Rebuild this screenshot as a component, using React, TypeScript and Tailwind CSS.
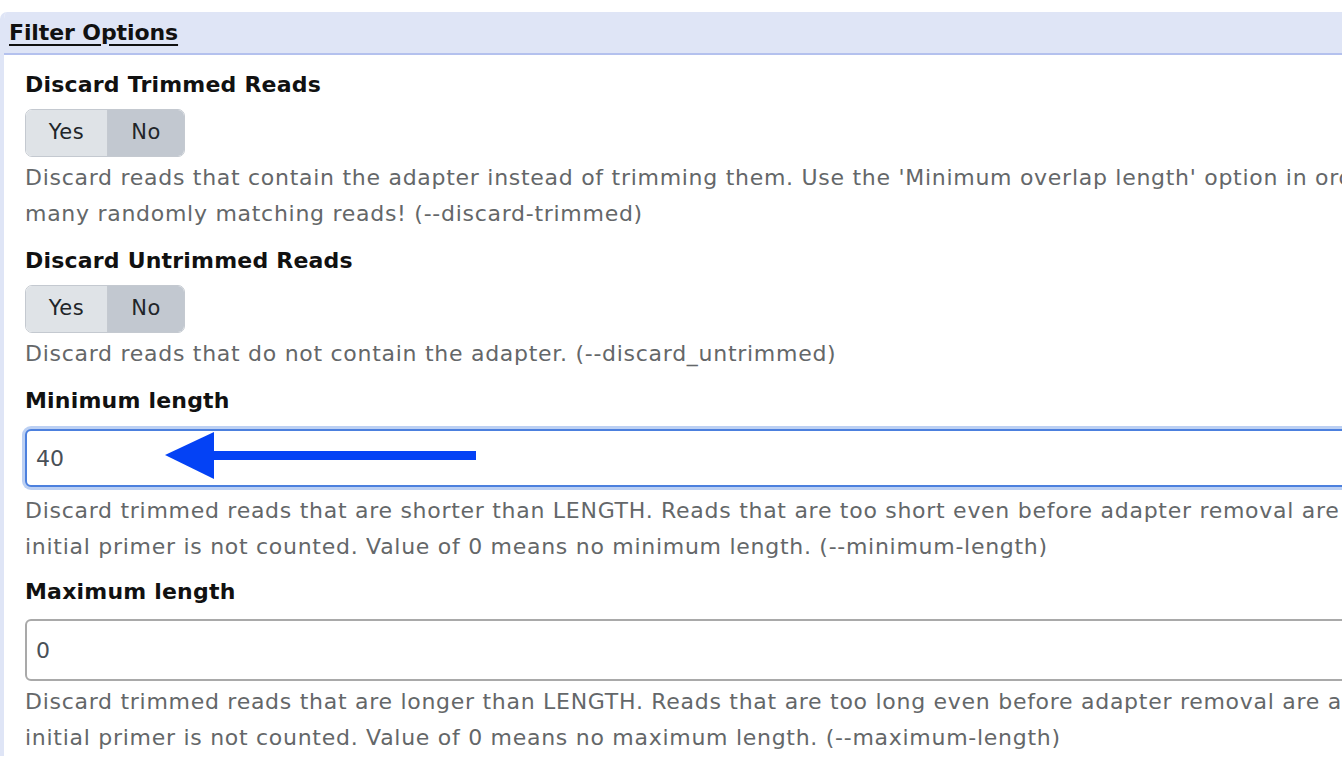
import React, { useState } from 'react'

const font = { fontFamily: '"DejaVu Sans", "Liberation Sans", sans-serif' }

const Toggle = ({ value, onChange }: { value: boolean; onChange: (v: boolean) => void }) => (
  <div className="flex h-[48px] w-[160px] rounded-[7px] border border-[#c4c9d0] overflow-hidden text-[21px] tracking-[0.5px] text-[#212529]">
    <button
      className={`w-[82px] border-r border-[#c4c9d0] ${value ? 'bg-[#c2c8d0]' : 'bg-[#dfe3e7]'}`}
      onClick={() => onChange(true)}
    >
      Yes
    </button>
    <button className={`flex-1 ${!value ? 'bg-[#c2c8d0]' : 'bg-[#dfe3e7]'}`} onClick={() => onChange(false)}>
      No
    </button>
  </div>
)

const Help = ({ lines }: { lines: string[] }) => (
  <div className="text-[22px] tracking-[0.72px] leading-[36px] text-[#646769] mt-[3px]">
    {lines.map((l, i) => (
      <div key={i} className="whitespace-nowrap">
        {l}
      </div>
    ))}
  </div>
)

const Label = ({ children }: { children: React.ReactNode }) => (
  <div className="text-[22px] tracking-[0.2px] font-bold text-[#111] leading-[30px] whitespace-nowrap">{children}</div>
)

const App = () => {
  const [trimmed, setTrimmed] = useState(false)
  const [untrimmed, setUntrimmed] = useState(false)
  const [minLen, setMinLen] = useState('40')
  const [maxLen, setMaxLen] = useState('0')

  return (
    <div className="w-[1342px] h-[764px] overflow-hidden bg-white" style={font}>
      <div className="mt-[12px] w-[1600px] rounded-tl-[7px] border-l-[4px] border-[#dfe5f6] overflow-hidden">
        <div className="h-[43px] bg-[#dfe5f6] border-b-[2px] border-[#b4c1ee] pl-[5px] flex items-center">
          <span className="text-[22px] tracking-[-0.1px] font-bold underline underline-offset-[4px] text-[#111]">Filter Options</span>
        </div>

        <div className="pl-[21px] pt-[15px]">
          <Label>Discard Trimmed Reads</Label>
          <div className="mt-[9px]">
            <Toggle value={trimmed} onChange={setTrimmed} />
          </div>
          <Help
            lines={[
              "Discard reads that contain the adapter instead of trimming them. Use the 'Minimum overlap length' option in order to avoid discarding too",
              'many randomly matching reads! (--discard-trimmed)',
            ]}
          />

          <div className="mt-[14px]">
            <Label>Discard Untrimmed Reads</Label>
          </div>
          <div className="mt-[9px]">
            <Toggle value={untrimmed} onChange={setUntrimmed} />
          </div>
          <Help lines={['Discard reads that do not contain the adapter. (--discard_untrimmed)']} />

          <div className="mt-[14px]">
            <Label>Minimum length</Label>
          </div>
          <div className="relative mt-[10px] -ml-[3px] p-[3px] rounded-[9px] bg-[#bcd0f3]">
            <input
              className="block w-full h-[58px] rounded-[6px] border-[2px] border-[#4c80de] bg-white px-[9px] text-[22px] text-[#495057] outline-none"
              value={minLen}
              onChange={(e) => setMinLen(e.target.value)}
            />
            <svg className="absolute left-[143px] top-[6px]" width="312" height="48" viewBox="0 0 312 48">
              <polygon points="0,23 49,0 49,47" fill="#0442f5" />
              <rect x="48" y="19" width="263" height="9" fill="#0442f5" />
            </svg>
          </div>
          <Help
            lines={[
              'Discard trimmed reads that are shorter than LENGTH. Reads that are too short even before adapter removal are also discarded. In colorspace, an',
              'initial primer is not counted. Value of 0 means no minimum length. (--minimum-length)',
            ]}
          />

          <div className="mt-[12px]">
            <Label>Maximum length</Label>
          </div>
          <input
            className="block mt-[12px] w-full h-[62px] rounded-[6px] border-[2px] border-[#a9a9a9] bg-white px-[9px] text-[22px] text-[#495057] outline-none"
            value={maxLen}
            onChange={(e) => setMaxLen(e.target.value)}
          />
          <Help
            lines={[
              'Discard trimmed reads that are longer than LENGTH. Reads that are too long even before adapter removal are also discarded. In colorspace, an',
              'initial primer is not counted. Value of 0 means no maximum length. (--maximum-length)',
            ]}
          />
        </div>
      </div>
    </div>
  )
}

export default App
